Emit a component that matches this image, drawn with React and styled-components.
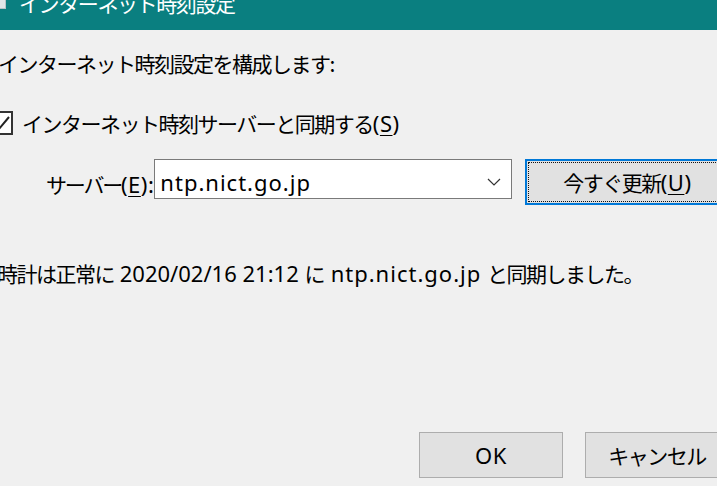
import React from "react";
import styled, { createGlobalStyle } from "styled-components";

const Global = createGlobalStyle`
  html, body {
    margin: 0;
    padding: 0;
    width: 100%;
    height: 100%;
    overflow: hidden;
    background: #f0f0f0;
  }
  #root { height: 100%; }
`;

const Window = styled.div`
  margin: -18px 0 0 -12px;
  width: 760px;
  height: 520px;
  background: #f0f0f0;
  display: flex;
  flex-direction: column;
  font-family: "Noto Sans CJK JP", sans-serif;
  color: #000;
`;

const TitleBar = styled.div`
  height: 48px;
  flex: 0 0 48px;
  background: #0a7f80;
  display: flex;
  align-items: flex-start;
  gap: 13px;
  padding: 9px 0 0 2px;
  box-sizing: border-box;
`;

const TitleIcon = styled.div`
  width: 16px;
  height: 16px;
  margin-top: 2px;
  background: #dfe6e8;
  border: 1px solid #b8c4c8;
  box-sizing: border-box;
`;

const TitleText = styled.span`
  color: #fff;
  font-size: 21px;
  line-height: 24px;
  letter-spacing: -1.4px;
`;

const Body = styled.div`
  display: flex;
  flex-direction: column;
`;

const Row = styled.div`
  display: flex;
  align-items: ${(p) => p.$align || "center"};
  margin-top: ${(p) => p.$top}px;
  padding-left: ${(p) => p.$indent}px;
  font-size: 21px;
  line-height: 30px;
  letter-spacing: -1.5px;
  white-space: pre;
`;

const Latin = styled.span`
  font-family: "Noto Sans", "Open Sans", sans-serif;
  font-size: 22px;
  letter-spacing: ${(p) => (p.$ls !== undefined ? p.$ls : 1)}px;
`;

const Key = styled.span`
  text-decoration: underline;
  text-underline-offset: 3px;
  text-decoration-thickness: 1px;
`;

const CheckBox = styled.span`
  flex: 0 0 auto;
  width: 24px;
  height: 24px;
  box-sizing: border-box;
  border: 2px solid #333;
  background: #fff;
  margin-right: 9px;
  display: flex;
  align-items: center;
  justify-content: center;
`;

const Label = styled.span`
  margin-top: 10px;
  margin-right: 0;
  letter-spacing: -2.2px;
`;

const Combo = styled.div`
  width: 358px;
  height: 40px;
  flex: 0 0 auto;
  box-sizing: border-box;
  border: 1px solid #7a7a7a;
  background: #fff;
  display: flex;
  align-items: center;
  justify-content: space-between;
  padding: 6px 10px 0 5px;
`;

const Button = styled.div`
  box-sizing: border-box;
  flex: 0 0 auto;
  width: ${(p) => p.$w}px;
  height: 46px;
  margin-left: ${(p) => p.$gap || 0}px;
  background: #e1e1e1;
  border: ${(p) => (p.$focus ? "2px solid #0078d7" : "1px solid #adadad")};
  display: flex;
  align-items: center;
  justify-content: center;
  font-size: 21px;
  position: relative;
  ${(p) =>
    p.$focus &&
    `
    &::after {
      content: "";
      position: absolute;
      inset: 1px;
      border: 1px dotted #111;
    }
  `}
`;

export default function App() {
  return (
    <>
      <Global />
      <Window>
        <TitleBar>
          <TitleIcon />
          <TitleText>インターネット時刻設定</TitleText>
        </TitleBar>
        <Body>
          <Row $top={18} $indent={10}>
            インターネット時刻設定を構成します:
          </Row>
          <Row $top={30} $indent={1}>
            <CheckBox>
              <svg width="18" height="18" viewBox="0 0 18 18">
                <path d="M2 10 L7 15 L17 3" fill="none" stroke="#222" strokeWidth="2" />
              </svg>
            </CheckBox>
            インターネット時刻サーバーと同期する<Latin $ls={0.5}>(<Key>S</Key>)</Latin>
          </Row>
          <Row $top={21} $indent={58} $align="flex-start">
            <Label>
              サーバー<Latin $ls={0.5}>(<Key>E</Key>):</Latin>
            </Label>
            <Combo>
              <Latin>ntp.nict.go.jp</Latin>
              <svg width="14" height="8" viewBox="0 0 14 8">
                <path d="M1 1 L7 7 L13 1" fill="none" stroke="#333" strokeWidth="1.2" />
              </svg>
            </Combo>
            <Button $w={204} $gap={13} $focus>
              今すぐ更新<Latin $ls={0.5}>(<Key>U</Key>)</Latin>
            </Button>
          </Row>
          <Row $top={53} $indent={9}>
            時計は正常に<Latin $ls={0}>{" 2020/02/16 21:12 "}</Latin>に<Latin>{" ntp.nict.go.jp"}</Latin>
            <Latin $ls={0}>{" "}</Latin>と同期しました。
          </Row>
          <Row $top={144} $indent={431}>
            <Button $w={144}>
              <Latin $ls={0.5}>OK</Latin>
            </Button>
            <Button $w={144} $gap={22}>
              キャンセル
            </Button>
          </Row>
        </Body>
      </Window>
    </>
  );
}
